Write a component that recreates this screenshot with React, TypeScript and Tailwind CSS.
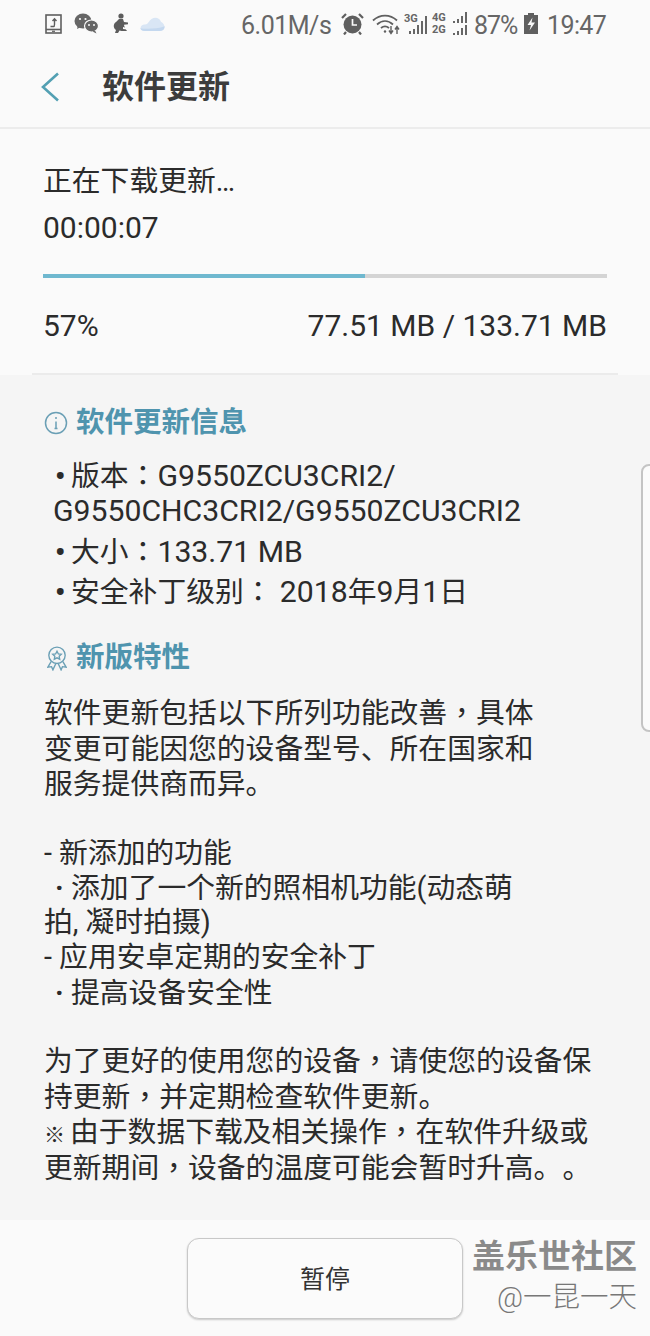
const cjk = "font-['Roboto','Noto_Sans_CJK_SC',sans-serif]";

function PhoneIcon() {
  return (
    <svg width="18" height="20" viewBox="0 0 18 20" fill="none" stroke="#5f5f5f" strokeWidth="1.6">
      <rect x="1" y="1" width="15" height="18" />
      <path d="M1 15.5h15" />
      <path d="M5.5 12.5h3c.8 0 1-1 1-2V5.5M7.5 7l2-2.2L11.5 7" strokeWidth="1.4" />
      <path d="M7 17.3h3" strokeWidth="1.2" />
    </svg>
  );
}

function WechatIcon() {
  return (
    <svg width="25" height="21" viewBox="0 0 25 21" fill="#666">
      <ellipse cx="9" cy="8" rx="8.5" ry="7.5" />
      <path d="M4 12l-1 4 5-2.5z" />
      <ellipse cx="17.5" cy="13" rx="7" ry="6" stroke="#fafafa" strokeWidth="1.2" />
      <path d="M21 17.5l1.5 3-4-2z" />
      <circle cx="6" cy="6" r="1.1" fill="#fafafa" />
      <circle cx="11.5" cy="6" r="1.1" fill="#fafafa" />
      <circle cx="15" cy="12" r="1" fill="#fafafa" />
      <circle cx="20" cy="12" r="1" fill="#fafafa" />
    </svg>
  );
}

function BabyIcon() {
  return (
    <svg width="17" height="21" viewBox="0 0 17 21" fill="#5c5c5c">
      <circle cx="9" cy="3" r="2.6" />
      <path d="M7 6h4l1 3 4 .5v1.8l-4 .5c0 1.5 1 2.5 1.5 4L15 18H9.5l-2-.5L6 20H3l1-3c-3-2-3-6 0-8z" />
      <path d="M11 14l4 1v1.5l-4-.5z" fill="#fafafa" />
    </svg>
  );
}

function CloudIcon() {
  return (
    <svg width="25" height="16" viewBox="0 0 26 17">
      <path d="M5 16c-6 0-6-6-1-7 2 0 3 .5 5-2.5C11 2 19-1 22 6c5 2 5 10-1 10z" fill="#d9e6f5" />
      <path d="M5 16c-3 0-5-2-5-3 4 1 18 1 26-2 0 3-2 5-5 5z" fill="#c4d8ef" />
    </svg>
  );
}

function AlarmIcon() {
  return (
    <svg width="23" height="23" viewBox="0 0 23 23">
      <circle cx="11.5" cy="12.5" r="9" fill="#5f5f5f" />
      <path d="M1 6l4-4M22 6l-4-4M5 20l-2 2.5M18 20l2 2.5" stroke="#5f5f5f" strokeWidth="2.2" />
      <path d="M11.5 7v6h4.5" fill="none" stroke="#fafafa" strokeWidth="1.7" />
    </svg>
  );
}

function WifiIcon() {
  return (
    <svg width="29" height="22" viewBox="0 0 29 22" fill="none" stroke="#5f5f5f" strokeWidth="1.8">
      <path d="M1 7.5C8 1 18 1 25 7.5" />
      <path d="M5 11.5C10 7 16 7 21 11.5" />
      <path d="M9 15c3-2.5 5-2.5 8 0" />
      <circle cx="13" cy="18.5" r="1.2" fill="#5f5f5f" stroke="none" />
      <path d="M19 13v7M17 17.5l2 3 2-3M25 21v-7M23 16.5l2-3 2 3" strokeWidth="1.4" />
    </svg>
  );
}

function SignalBars({ heights }: { heights: number[] }) {
  return (
    <div className="flex items-end gap-[2px]">
      {heights.map((h, i) => (
        <span key={i} className="w-[2px] bg-[#666]" style={{ height: h }} />
      ))}
    </div>
  );
}

function BatteryIcon() {
  return (
    <svg width="14" height="21" viewBox="0 0 14 21">
      <path d="M4 0h6v2h4v19H0V2h4z" fill="#5f5f5f" />
      <path d="M8.5 4.5L3.5 12H7l-1.5 5.5L11 9.5H7.5z" fill="#fafafa" />
    </svg>
  );
}

function StatusBar() {
  return (
    <div className="flex h-[47px] items-center pl-[45px] text-[#666]">
      <div className="flex w-[196px] shrink-0 items-center">
        <PhoneIcon />
        <div className="ml-[11px]"><WechatIcon /></div>
        <div className="ml-[13px]"><BabyIcon /></div>
        <div className="ml-[11px]"><CloudIcon /></div>
      </div>
      <span className="mt-[3px] w-[100px] shrink-0 whitespace-nowrap text-[25px] leading-none tracking-[-0.5px]">6.01M/s</span>
      <div className="shrink-0"><AlarmIcon /></div>
      <div className="ml-[8px] shrink-0"><WifiIcon /></div>
      <div className="relative ml-[3px] flex h-[21px] w-[23px] shrink-0 items-end justify-end">
        <span className="absolute left-0 top-0 text-[11px] font-bold leading-none">3G</span>
        <SignalBars heights={[3, 5, 9, 13, 18]} />
      </div>
      <div className="ml-[5px] flex h-[23px] w-[35px] shrink-0 flex-col justify-between">
        <div className="flex items-end justify-between">
          <span className="text-[11px] font-bold leading-none">4G</span>
          <SignalBars heights={[2, 4, 7, 11]} />
        </div>
        <div className="flex items-end justify-between">
          <span className="text-[11px] font-bold leading-none">2G</span>
          <SignalBars heights={[2, 4, 7, 10]} />
        </div>
      </div>
      <span className="ml-[7px] mt-[3px] w-[43px] shrink-0 whitespace-nowrap text-[25px] leading-none tracking-[-1px]">87%</span>
      <div className="ml-[7px] shrink-0"><BatteryIcon /></div>
      <span className="ml-[9px] mt-[3px] shrink-0 whitespace-nowrap text-[25px] leading-none tracking-[-0.6px]">19:47</span>
    </div>
  );
}

function InfoIcon() {
  return (
    <svg width="24" height="24" viewBox="0 0 24 24" fill="none" stroke="#6a9fb5" strokeWidth="1.5">
      <circle cx="12" cy="12" r="10.5" />
      <path d="M12 10.5v7M10.5 17.5h3" />
      <circle cx="12" cy="7" r="1" fill="#6a9fb5" stroke="none" />
    </svg>
  );
}

function BadgeIcon() {
  return (
    <svg className="ml-[3px]" width="20" height="25" viewBox="0 0 22 27" fill="none" stroke="#6a9fb5" strokeWidth="1.5">
      <circle cx="11" cy="10" r="9" />
      <path d="M11 5.5l1.5 3 3.2.4-2.3 2.2.6 3.2-3-1.5-3 1.5.6-3.2-2.3-2.2 3.2-.4z" />
      <path d="M4.5 17l-3.5 6 4-.5 1.5 3.5 3-6.5M17.5 17l3.5 6-4-.5-1.5 3.5-3-6.5" />
    </svg>
  );
}

function SectionTitle({ icon, children }: { icon: React.ReactNode; children: React.ReactNode }) {
  return (
    <div className="flex items-center">
      <div className="flex w-[32px] items-center">{icon}</div>
      <h2 className="text-[28.5px] font-bold leading-[36px] text-[#4f94ae]">{children}</h2>
    </div>
  );
}

// latin runs sit a bit larger than the CJK text in the reference
function L({ children }: { children: React.ReactNode }) {
  return <span className="text-[30.2px] leading-[0]">{children}</span>;
}

// comma and colon are centred in the cell, as in the TC face
function P({ children }: { children: React.ReactNode }) {
  return <span className="font-['Noto_Sans_CJK_TC'] leading-[0]">{children}</span>;
}

function Bullet({ children }: { children: React.ReactNode }) {
  return <span className="inline-block w-[27px] pl-[11px] font-bold">{children}</span>;
}

export default function App() {
  return (
    <div className={`${cjk} relative h-[1336px] w-[650px] overflow-hidden bg-[#fafafa] text-[28.8px] text-[#2b2b2b] [text-spacing-trim:space-all]`}>
      <StatusBar />

      <header className="flex h-[82px] items-center border-b-2 border-[#ececec] pl-[41px]">
        <svg width="18" height="30" viewBox="0 0 18 30" fill="none" stroke="#53a0b3" strokeWidth="2.6">
          <path d="M17 1.5L2 15l15 13.5" />
        </svg>
        <h1 className="ml-[43px] text-[32px] font-bold leading-none text-[#3c3c3c]">软件更新</h1>
      </header>

      <section className="flex h-[246px] flex-col px-[43px] pt-[32px]">
        <p className="leading-[40px]">正在下载更新…</p>
        <p className="mt-[7px] text-[30px] leading-[40px]">00:00:07</p>
        <div className="mt-[26px] h-[4px] w-[564px] bg-[#d4d4d4]">
          <div className="h-full w-[322px] bg-[#6fb8cf]" />
        </div>
        <div className="mt-[28px] flex justify-between text-[30px] leading-[40px]">
          <span>57%</span>
          <span>77.51 MB / 133.71 MB</span>
        </div>
        <div className="-mx-[11px] mt-auto h-[2px] bg-[#ebebeb]" />
      </section>

      <main className="h-[845px] bg-[#f5f5f5] pl-[44px] pr-[40px] pt-[30px]">
        <SectionTitle icon={<InfoIcon />}>软件更新信息</SectionTitle>
        <div className="mt-[17px] leading-[36px]">
          <p><Bullet>•</Bullet>版本<P>：</P><L>G9550ZCU3CRI2/</L></p>
          <p className="-mt-px pl-[9px]"><L>G9550CHC3CRI2/G9550ZCU3CRI2</L></p>
          <p className="mt-[5px]"><Bullet>•</Bullet>大小<P>：</P><L>133.71 MB</L></p>
          <p className="mt-[4px]"><Bullet>•</Bullet>安全补丁级别<P>：</P> <L>2018</L>年<L>9</L>月<L>1</L>日</p>
        </div>
        <div className="mt-[30px]">
          <SectionTitle icon={<BadgeIcon />}>新版特性</SectionTitle>
        </div>
        <div className="mt-[20px] leading-[35.5px]">
          <p>软件更新包括以下所列功能改善<P>，</P>具体</p>
          <p>变更可能因您的设备型号、所在国家和</p>
          <p>服务提供商而异。</p>
          <p className="mt-[33px]">- 新添加的功能</p>
          <p><Bullet>·</Bullet>添加了一个新的照相机功能(动态萌</p>
          <p className="-mt-[2px]">拍, 凝时拍摄)</p>
          <p>- 应用安卓定期的安全补丁</p>
          <p><Bullet>·</Bullet>提高设备安全性</p>
          <p className="mt-[33px]">为了更好的使用您的设备<P>，</P>请使您的设备保</p>
          <p>持更新<P>，</P>并定期检查软件更新。</p>
          <p><span className="inline-block w-[26px] text-[21px] font-bold leading-[0]">※</span>由于数据下载及相关操作<P>，</P>在软件升级或</p>
          <p>更新期间<P>，</P>设备的温度可能会暂时升高。。</p>
        </div>
      </main>

      <footer className="flex h-[116px] pl-[187px] pt-[18px]">
        <button className="h-[81px] w-[276px] rounded-[12px] border border-[#c8c8c8] bg-[#fbfbfb] pt-[2px] text-[25px] text-[#333] shadow-[0_1px_2px_rgba(0,0,0,0.2)]">
          暂停
        </button>
      </footer>

      {/* edge panel handle */}
      <div className="absolute left-[641px] top-[464px] h-[268px] w-[12px] rounded-l-[8px] border-2 border-[#c4c4c4] bg-[#fbfbfb]" />

      {/* watermark */}
      <div className="absolute right-[13px] top-[1238px] flex flex-col items-end">
        <span className="text-[33px] font-bold leading-[38px] text-[#8a8a8a]">盖乐世社区</span>
        <span className="mt-[6px] text-[28.5px] font-light leading-[32px] text-[#777]">@一昆一天</span>
      </div>
    </div>
  );
}
